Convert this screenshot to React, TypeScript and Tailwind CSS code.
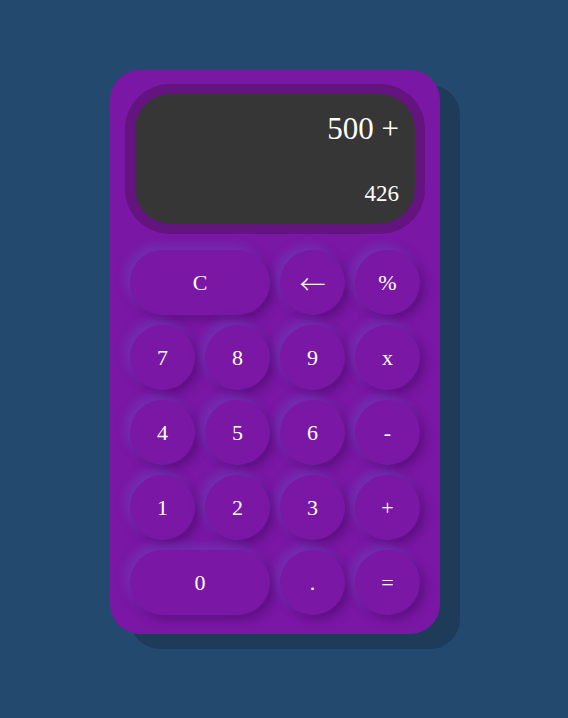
import React from "react";

const keys = [
  { label: "C", wide: true },
  { label: "←", arrow: true },
  { label: "%" },
  { label: "7" },
  { label: "8" },
  { label: "9" },
  { label: "x" },
  { label: "4" },
  { label: "5" },
  { label: "6" },
  { label: "-" },
  { label: "1" },
  { label: "2" },
  { label: "3" },
  { label: "+" },
  { label: "0", wide: true },
  { label: "." },
  { label: "=" },
];

const App = () => {
  return (
    <div className="min-h-[718px] bg-[#234a6e] pt-[70px] pl-[110px]">
      {/* Calculator body */}
      <div className="w-[330px] rounded-[30px] bg-[#7a17a5] px-[15px] pt-[14px] pb-[19px] shadow-[20px_15px_0_#1f3b5a]">
        {/* Display */}
        <div className="rounded-[45px] bg-[#63147f] p-[10px]">
          <div className="flex h-[130px] flex-col items-end rounded-[36px] bg-[#363636] pr-[16px] font-['Liberation_Serif',serif] text-white">
            <p className="mt-[18px] text-[31px] leading-[34px]">500 +</p>
            <p className="mt-auto mb-[17px] text-[23px] leading-[26px]">426</p>
          </div>
        </div>

        {/* Keypad */}
        <div className="mt-[16px] grid grid-cols-[repeat(4,65px)] gap-[10px] px-[5px]">
          {keys.map((k, i) => (
            <button
              key={i}
              className={`${k.wide ? "col-span-2" : ""} flex h-[65px] items-center justify-center rounded-full bg-[#7a17a5] font-['Liberation_Serif',serif] text-[22px] text-white shadow-[-5px_-5px_10px_rgba(105,75,190,0.45),5px_5px_10px_rgba(70,10,100,0.5)]`}
            >
              {k.arrow ? (
                <span className="font-['Noto_Sans_CJK_JP',sans-serif] text-[26px] font-light">{k.label}</span>
              ) : (
                k.label
              )}
            </button>
          ))}
        </div>
      </div>
    </div>
  );
};

export default App;
